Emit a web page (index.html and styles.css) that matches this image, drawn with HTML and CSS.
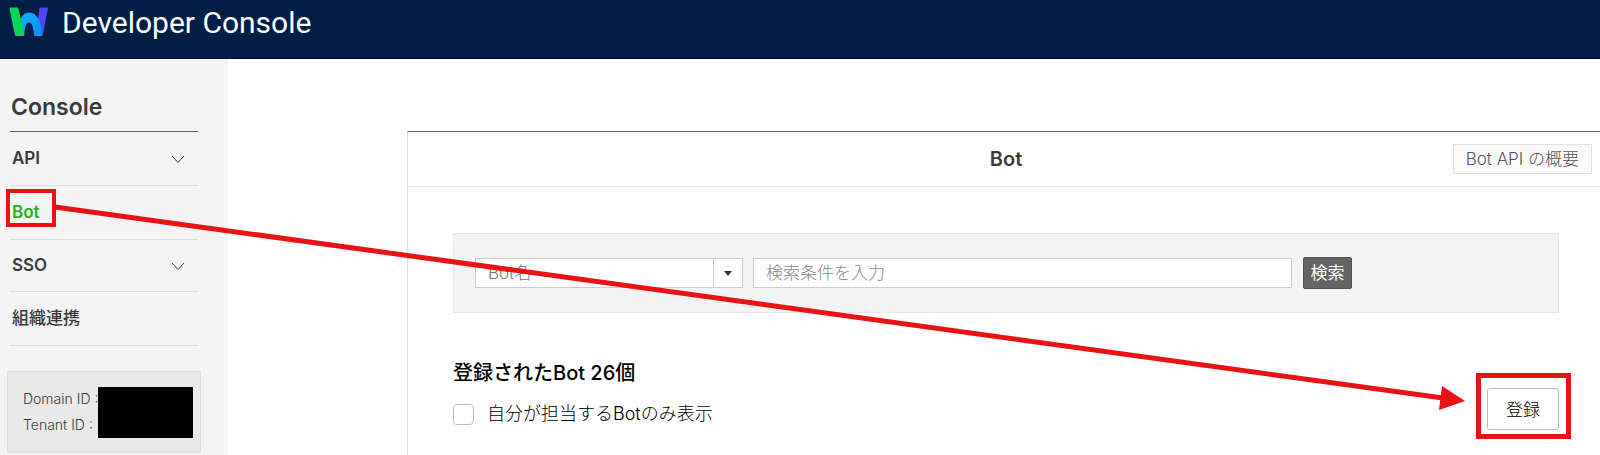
FILE: index.html
```
<!DOCTYPE html>
<html lang="ja">
<head>
    <meta charset="UTF-8">
    <meta name="viewport" content="width=device-width, initial-scale=1.0">
    <title>Developer Console</title>
    <link rel="stylesheet" href="styles.css">
</head>
<body>
    <header class="header">
        <svg class="logo" width="40" height="30" viewBox="0 0 40 30" aria-hidden="true">
            <defs>
                <linearGradient id="arch" x1="0" y1="0" x2="1" y2="1">
                    <stop offset="0" stop-color="#12b4f5"/>
                    <stop offset="1" stop-color="#0a8cff"/>
                </linearGradient>
            </defs>
            <path d="M30.500 0.500H39L34 27.500Q33.500 29 32 29H27Z" fill="#5046f5"/>
            <path d="M11 16C12 9 15 5.500 20 5.500C28 5.500 32 14 33 28Q33 29 32 29H26Q25 29 25 28C24.500 20 23 15.500 20 15.500C17 15.500 16 20 15 27Z" fill="url(#arch)"/>
            <path d="M1 0.500H8Q9 0.500 9.500 2L15.500 27Q15.500 29 14 29H7.500Q6 29 5.800 27.500L0.500 1.500Q0.300 0.500 1 0.500Z" fill="#06d65b"/>
        </svg>
        <span class="header-title">Developer Console</span>
    </header>

    <div class="container">
        <nav class="sidebar">
            <h2>Console</h2>
            <ul class="menu">
                <li>
                    <a href="#">API</a>
                    <svg class="chevron" width="14" height="9" viewBox="0 0 14 9"><path d="M1 1L7 7.500L13 1"/></svg>
                </li>
                <li class="active"><a href="#">Bot</a></li>
                <li>
                    <a href="#">SSO</a>
                    <svg class="chevron" width="14" height="9" viewBox="0 0 14 9"><path d="M1 1L7 7.500L13 1"/></svg>
                </li>
                <li><a href="#">組織連携</a></li>
            </ul>
            <div class="domain-info">
                <p>Domain ID :</p>
                <p>Tenant ID : <span class="tenant">5</span></p>
                <div class="mask"></div>
            </div>
        </nav>

        <main class="content">
            <div class="content-header">
                <h1>Bot</h1>
                <a class="btn-guide" href="#">Bot API の概要</a>
            </div>

            <form class="search">
                <div class="select-wrap">
                    <select name="searchType" aria-label="検索対象">
                        <option>Bot名</option>
                    </select>
                </div>
                <input type="text" name="keyword" placeholder="検索条件を入力" aria-label="検索条件">
                <button type="button">検索</button>
            </form>

            <div class="list-header">
                <div>
                    <h3>登録されたBot 26個</h3>
                    <div class="check">
                        <input type="checkbox" id="mine">
                        <label for="mine">自分が担当するBotのみ表示</label>
                    </div>
                </div>
                <div class="register">
                    <button type="button">登録</button>
                </div>
            </div>
        </main>
    </div>

    <!-- arrow from the Bot menu to the register button -->
    <svg class="arrow-line" viewBox="0 0 100 100" preserveAspectRatio="none" aria-hidden="true">
        <line x1="0" y1="0" x2="100" y2="100"/>
    </svg>
    <svg class="arrow-head" width="26" height="26" viewBox="0 0 26 26" aria-hidden="true">
        <path d="M3 1L26 16L0 25Z"/>
    </svg>
</body>
</html>
```
FILE: styles.css
```
*, *::before, *::after {
    box-sizing: border-box;
}
body {
    position: relative;
    min-height: 100vh;
    margin: 0;
    display: flex;
    flex-direction: column;
    overflow: hidden;
    font-family: Inter, "Noto Sans CJK JP", sans-serif;
    color: #3a3a3a;
    background-color: #fff;
}
h1, h2, h3, p, ul {
    margin: 0;
    padding: 0;
}
a {
    color: inherit;
    text-decoration: none;
}
button, input, select {
    font-family: inherit;
}

/* header */
.header {
    display: flex;
    align-items: flex-start;
    gap: 13px;
    height: 59px;
    padding: 7px 9px;
    background-color: #001e46;
    border-bottom: 1px solid #000a28;
}
.header-title {
    font-family: Roboto, sans-serif;
    font-size: 30px;
    line-height: 32px;
    color: #fff;
}

/* sidebar */
.container {
    display: flex;
    flex: 1;
}
.sidebar {
    flex: none;
    width: 228px;
    padding: 32px 27px 0 7px;
    background-color: #f4f4f4;
}
.sidebar h2 {
    width: 188px;
    height: 41px;
    margin-left: 3px;
    padding-left: 1px;
    border-bottom: 1px solid #666;
    font-size: 23px;
    font-weight: 600;
    line-height: 32px;
}
.menu {
    width: 188px;
    margin-left: 3px;
    list-style: none;
}
.menu li {
    position: relative;
    display: flex;
    align-items: center;
    justify-content: space-between;
    height: 54px;
    padding: 0 13px 2px 2px;
    border-bottom: 1px solid #dcdcdc;
    font-size: 17px;
    font-weight: 600;
    line-height: 24px;
}
.menu li:nth-child(3) {
    height: 52px;
}
.menu li:last-child {
    font-weight: 500;
}
.menu .active {
    color: #1eb41e;
}
.menu .active::after {
    content: "";
    position: absolute;
    left: -4px;
    top: 3px;
    width: 50px;
    height: 38px;
    border: 4px solid #e81313;
}
.chevron {
    margin-top: 4px;
}
.chevron path {
    fill: none;
    stroke: #444;
}
.domain-info {
    position: relative;
    width: 194px;
    margin-top: 25px;
    padding: 14px 15px;
    border: 1px solid #dcdcdc;
    background-color: #e9e9e9;
    font-size: 14px;
    font-weight: 300;
    line-height: 26px;
}
.tenant {
    color: #1eb41e;
}
.mask {
    position: absolute;
    left: 90px;
    top: 15px;
    width: 95px;
    height: 51px;
    background-color: #000;
}

/* content */
.content {
    flex: 1;
    margin: 72px 0 0 179px;
    border-top: 1px solid #666;
    border-left: 1px solid #dcdcdc;
}
.content-header {
    position: relative;
    display: flex;
    align-items: center;
    justify-content: center;
    height: 55px;
    padding-left: 4px;
    border-bottom: 1px solid #e1e1e1;
}
.content-header h1 {
    font-size: 20px;
    font-weight: 600;
    line-height: 24px;
}
.btn-guide {
    position: absolute;
    right: 8px;
    padding: 2px 12px;
    border: 1px solid #e1e1e1;
    background-color: #fafafa;
    font-size: 17px;
    font-weight: 300;
    line-height: 24px;
    color: #555;
}
.search {
    display: flex;
    align-items: center;
    margin: 46px 41px 0 45px;
    padding: 23px 206px 23px 21px;
    border: 1px solid #e6e6e6;
    background-color: #f3f3f3;
}
.select-wrap {
    position: relative;
    width: 268px;
    margin-right: 10px;
}
.select-wrap::before {
    content: "";
    position: absolute;
    right: 29px;
    top: 0;
    height: 30px;
    border-left: 1px solid #ccc;
}
.select-wrap::after {
    content: "";
    position: absolute;
    right: 11px;
    top: 13px;
    border: 4px solid transparent;
    border-top: 5px solid #333;
    border-bottom: 0;
    pointer-events: none;
}
.search select,
.search input {
    display: block;
    width: 100%;
    height: 30px;
    padding: 0 12px;
    border: 1px solid #ccc;
    border-radius: 0;
    background-color: #fff;
    font-size: 17px;
    font-weight: 300;
    color: #777;
}
.search select {
    appearance: none;
}
.search input {
    flex: 1;
}
.search input::placeholder {
    color: #888;
}
.search button {
    flex: none;
    width: 49px;
    height: 32px;
    margin-left: 11px;
    padding: 0;
    border: 1px solid #505050;
    border-radius: 2px;
    background-color: #646464;
    font-size: 17px;
    line-height: 24px;
    color: #fff;
}
.list-header {
    display: flex;
    align-items: flex-end;
    justify-content: space-between;
    margin: 46px 29px 0 45px;
}
.list-header h3 {
    font-size: 20px;
    font-weight: 500;
    line-height: 28px;
    color: #000;
}
.check {
    display: flex;
    align-items: center;
    gap: 13px;
    margin: 13px 0 11px;
    font-size: 18px;
    font-weight: 300;
    line-height: 28px;
    color: #000;
}
.check input {
    appearance: none;
    width: 21px;
    height: 21px;
    margin: 0;
    border: 1px solid #bbb;
    border-radius: 4px;
    background-color: #fff;
}
.register {
    padding: 10px 7px 4px 6px;
    border: 5px solid #e81313;
}
.register button {
    display: block;
    width: 72px;
    height: 42px;
    padding: 0 0 2px;
    border: 1px solid #bbb;
    border-radius: 3px;
    background-color: #fff;
    font-size: 17px;
    font-weight: 300;
    color: #000;
}

/* arrow */
.arrow-line {
    position: absolute;
    left: 55px;
    top: 207px;
    width: calc(100% - 212px);
    height: 191px;
    overflow: visible;
    pointer-events: none;
}
.arrow-line line {
    stroke: #e81313;
    stroke-width: 5px;
    vector-effect: non-scaling-stroke;
}
.arrow-head {
    position: absolute;
    right: 135px;
    top: 385px;
    fill: #e81313;
    pointer-events: none;
}
```
